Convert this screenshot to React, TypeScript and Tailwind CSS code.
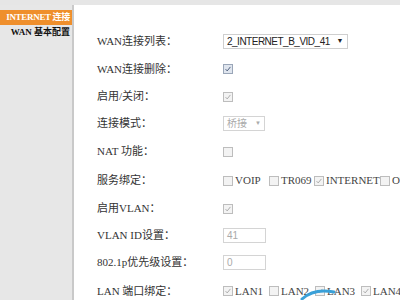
import React from "react";

type Box = { label?: string; checked: boolean; w: string };

function Check({ checked, active }: { checked: boolean; active?: boolean }) {
  return (
    <span
      className={
        "inline-flex items-center justify-center w-[10px] h-[10px] border shrink-0 " +
        (active ? "border-[#9aa6b8] bg-[#dfe5ee]" : "border-[#bdbdbd] bg-[#f3f3f3]")
      }
    >
      {checked && (
        <svg viewBox="0 0 10 10" className="w-[8px] h-[8px]">
          <path
            d="M2 5.2 L4 7.4 L8 2.4"
            fill="none"
            stroke={active ? "#4a5a78" : "#a8a8a8"}
            strokeWidth="1.2"
          />
        </svg>
      )}
    </span>
  );
}

function BoxGroup({ items }: { items: Box[] }) {
  return (
    <div className="flex items-center whitespace-nowrap">
      {items.map((b, i) => (
        <span key={i} className={"flex items-center shrink-0 " + b.w}>
          <Check checked={b.checked} />
          <span className="ml-[2px] text-[11px] text-[#444]">{b.label}</span>
        </span>
      ))}
    </div>
  );
}

const rows: { label: string; h: string; value: React.ReactNode }[] = [
  {
    label: "WAN连接列表：",
    h: "h-[28px]",
    value: (
      <div className="flex items-center justify-between w-[125px] h-[15px] border border-[#cfcfcf] bg-white pl-[3px] pr-[4px] text-[10px] tracking-[-0.5px] text-[#222] font-['Liberation_Sans',sans-serif]">
        <span>2_INTERNET_B_VID_41</span>
        <span className="text-[7px]">▼</span>
      </div>
    ),
  },
  { label: "WAN连接删除：", h: "h-[28px]", value: <Check checked active /> },
  { label: "启用/关闭：", h: "h-[27px]", value: <Check checked /> },
  {
    label: "连接模式：",
    h: "h-[27px]",
    value: (
      <div className="flex items-center justify-between w-[42px] h-[15px] border border-[#d4d4d4] bg-white px-[3px] text-[10px] text-[#aaa]">
        <span>桥接</span>
        <span className="text-[6px]">▼</span>
      </div>
    ),
  },
  { label: "NAT 功能：", h: "h-[29px]", value: <Check checked={false} /> },
  {
    label: "服务绑定：",
    h: "h-[29px]",
    value: (
      <BoxGroup
        items={[
          { label: "VOIP", checked: false, w: "w-[46px]" },
          { label: "TR069", checked: false, w: "w-[45px]" },
          { label: "INTERNET", checked: true, w: "w-[66px]" },
          { label: "OTHER", checked: false, w: "w-[50px]" },
        ]}
      />
    ),
  },
  { label: "启用VLAN：", h: "h-[27px]", value: <Check checked /> },
  {
    label: "VLAN ID设置：",
    h: "h-[26px]",
    value: (
      <div className="flex items-center w-[43px] h-[15px] border border-[#d4d4d4] bg-white px-[3px] text-[10px] text-[#aaa] font-['Liberation_Sans',sans-serif]">
        41
      </div>
    ),
  },
  {
    label: "802.1p优先级设置：",
    h: "h-[28px]",
    value: (
      <div className="flex items-center w-[43px] h-[15px] border border-[#d4d4d4] bg-white px-[3px] text-[10px] text-[#aaa] font-['Liberation_Sans',sans-serif]">
        0
      </div>
    ),
  },
  {
    label: "LAN 端口绑定：",
    h: "h-[30px]",
    value: (
      <BoxGroup
        items={[
          { label: "LAN1", checked: true, w: "w-[46px]" },
          { label: "LAN2", checked: false, w: "w-[46px]" },
          { label: "LAN3", checked: true, w: "w-[46px]" },
          { label: "LAN4", checked: true, w: "w-[46px]" },
        ]}
      />
    ),
  },
];

export default function App() {
  return (
    <div className="relative w-[400px] h-[300px] overflow-hidden bg-white font-['Liberation_Serif','Noto_Sans_CJK_SC',serif]">
      <div className="h-[5px] bg-[#e6e6e6]" />
      <div className="flex h-[295px]">
        <aside className="w-[74px] shrink-0 bg-[#e7e7e7] border-r-2 border-[#c9c9c9] pt-[5px]">
          <div className="h-[15px] bg-[#ef8f2c] flex items-center justify-end pr-[2px] text-[9px] tracking-[-0.3px] font-bold text-white whitespace-nowrap">
            INTERNET 连接
          </div>
          <div className="h-[15px] flex items-center justify-end pr-[2px] text-[9px] font-bold text-[#111] whitespace-nowrap">
            WAN 基本配置
          </div>
        </aside>
        <main className="flex-1 pt-[22px] pl-[23px]">
          {rows.map((r, i) => (
            <div key={i} className={"flex items-center " + r.h}>
              <div className="w-[126px] shrink-0 text-[11px] text-[#333] whitespace-nowrap">
                {r.label}
              </div>
              <div className="flex items-center">{r.value}</div>
            </div>
          ))}
        </main>
      </div>
      <svg className="absolute left-[300px] top-[286px]" width="40" height="14" viewBox="0 0 40 14">
        <path d="M2 13 Q14 2 34 6" fill="none" stroke="#3aa0d8" strokeWidth="3" strokeLinecap="round" />
      </svg>
    </div>
  );
}
